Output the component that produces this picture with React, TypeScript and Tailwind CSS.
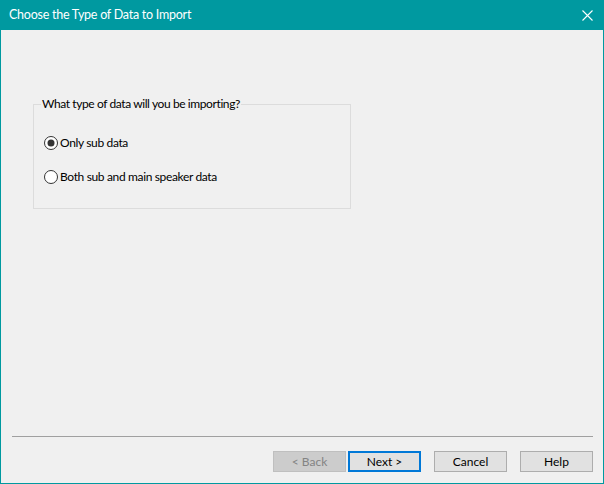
import React from 'react'

const font = { fontFamily: 'Lato, "Noto Sans", sans-serif' }

function Radio({ checked, label }: { checked?: boolean; label: string }) {
  return (
    <label className="flex items-center gap-[2px] text-[12px] leading-[16px] tracking-[-0.35px] text-black">
      <svg width="14" height="14" viewBox="0 0 14 14" className="shrink-0">
        <circle cx="7" cy="7" r="6.5" fill="#fff" stroke="#333" strokeWidth="1" />
        {checked && <circle cx="7" cy="7" r="3.5" fill="#333" />}
      </svg>
      <span>{label}</span>
    </label>
  )
}

function Btn({ children, variant }: { children: React.ReactNode; variant?: 'disabled' | 'default' }) {
  const cls =
    variant === 'disabled'
      ? 'bg-[#cccccc] border border-[#bfbfbf] text-[#838383]'
      : variant === 'default'
        ? 'bg-[#e1e1e1] border-2 border-[#0078d7] text-black'
        : 'bg-[#e1e1e1] border border-[#adadad] text-black'
  return (
    <button className={`w-[73px] h-[21px] flex items-center justify-center text-[12px] ${cls}`}>
      {children}
    </button>
  )
}

export default function App() {
  return (
    <div
      className="w-[604px] h-[484px] border border-[#0099a0] bg-[#f0f0f0] flex flex-col"
      style={font}
    >
      {/* title bar */}
      <div className="h-[30px] -mt-px -mx-px bg-[#0099a0] flex items-center justify-between pl-[9px] pr-[11px]">
        <span className="text-white text-[12.5px] tracking-[-0.25px]">Choose the Type of Data to Import</span>
        <svg width="11" height="11" viewBox="0 0 11 11">
          <path d="M0.5 0.5L10.5 10.5M10.5 0.5L0.5 10.5" stroke="#fff" strokeWidth="1.1" />
        </svg>
      </div>

      <div className="flex-1 flex flex-col">
        <fieldset className="ml-[32px] mt-[66px] w-[318px] h-[113px] border border-[#dcdcdc] px-[10px]">
          <legend className="text-[12px] text-black px-[1px] -ml-[3px] leading-[16px] tracking-[-0.4px]">
            What type of data will you be importing?
          </legend>
          <div className="flex flex-col gap-[18px] mt-[23px]">
            <Radio checked label="Only sub data" />
            <Radio label="Both sub and main speaker data" />
          </div>
        </fieldset>

        <div className="flex-1" />

        <div className="ml-[11px] mr-[10px] h-px bg-[#a0a0a0]" />

        <div className="flex justify-end mt-[14px] mb-[11px] mr-[10px]">
          <div className="flex gap-[2px]">
            <Btn variant="disabled">&lt; Back</Btn>
            <Btn variant="default">Next &gt;</Btn>
          </div>
          <div className="flex gap-[13px] ml-[13px]">
            <Btn>Cancel</Btn>
            <Btn>Help</Btn>
          </div>
        </div>
      </div>
    </div>
  )
}
